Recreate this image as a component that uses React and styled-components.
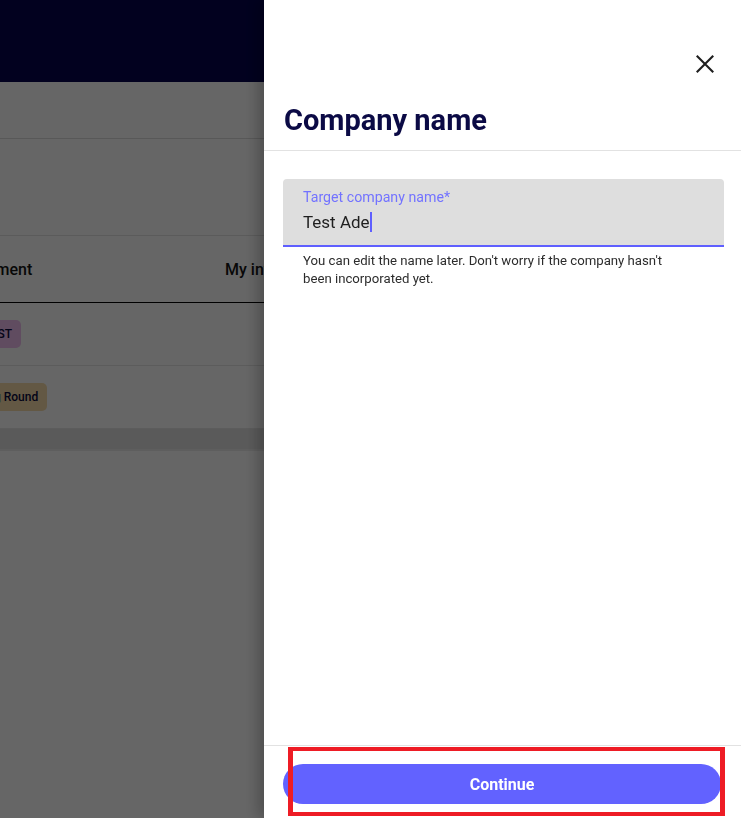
import React from "react";
import styled, { createGlobalStyle } from "styled-components";

const GlobalStyle = createGlobalStyle`
  html, body { margin: 0; padding: 0; }
  body {
    font-family: Roboto, "Noto Sans", "Liberation Sans", sans-serif;
    overflow: hidden;
    background: #fff;
  }
  * { box-sizing: border-box; }
`;

const Page = styled.div`
  position: relative;
  height: 100vh;
  overflow: hidden;
  background: #ffffff;
`;

const TopBar = styled.header`
  height: 82px;
  background: #05034e;
`;

const SubBar = styled.div`
  height: 57px;
  border-bottom: 1px solid #dcdcdc;
`;

const Summary = styled.section`
  height: 97px;
  border-bottom: 1px solid #e4e4e4;
`;

const Table = styled.div`
  margin-left: -46px;
  width: 760px;
`;

const Row = styled.div`
  display: grid;
  grid-template-columns: 271px 1fr;
  align-items: center;
  height: ${(p) => p.$h || 63}px;
  border-bottom: 1px solid ${(p) => (p.$dark ? "#000000" : "#e6e6e6")};
`;

const HeadCell = styled.div`
  font-size: 16px;
  font-weight: 500;
  color: #141414;
  white-space: nowrap;
`;

const Badge = styled.span`
  display: inline-flex;
  align-items: center;
  height: 28px;
  padding: 0 9px;
  border-radius: 5px;
  font-size: 12px;
  font-weight: 500;
  color: #0a0a3c;
  background: ${(p) => p.$bg};
  white-space: nowrap;
`;

const Band = styled.div`
  height: 22px;
  background: #e2e2e2;
  border-bottom: 2px solid #ececec;
`;

const Backdrop = styled.div`
  position: fixed;
  inset: 0;
  background: rgba(0, 0, 0, 0.6);
`;

const Drawer = styled.aside`
  position: fixed;
  top: 0;
  right: 0;
  bottom: 0;
  width: 477px;
  background: #ffffff;
  display: flex;
  flex-direction: column;
  box-shadow: -6px 0 14px rgba(0, 0, 0, 0.25);
`;

const DrawerHeader = styled.div`
  padding: 52px 24px 13px 20px;
  border-bottom: 1px solid #e2e2e2;
  display: flex;
  flex-direction: column;
`;

const CloseButton = styled.button`
  align-self: flex-end;
  width: 24px;
  height: 24px;
  padding: 0;
  border: none;
  background: transparent;
  display: flex;
  align-items: center;
  justify-content: center;
  cursor: pointer;
`;

const Title = styled.h1`
  margin: 27px 0 0;
  font-size: 29px;
  line-height: 34px;
  font-weight: 700;
  color: #0b0a45;
`;

const DrawerBody = styled.div`
  flex: 1;
  padding: 28px 17px 0 19px;
`;

const Field = styled.div`
  background: #dedede;
  border-radius: 4px 4px 0 0;
  border-bottom: 2px solid #5f5fff;
  padding: 10px 20px 11px;
`;

const Label = styled.div`
  font-size: 14.2px;
  line-height: 16px;
  color: #7373ff;
`;

const Value = styled.div`
  margin-top: 5px;
  font-size: 17px;
  line-height: 24px;
  color: #1f1f1f;
  display: flex;
  align-items: center;
`;

const Caret = styled.span`
  display: inline-block;
  width: 2px;
  height: 20px;
  background: #5f5fff;
`;

const Helper = styled.p`
  margin: 5px 0 0;
  padding-left: 20px;
  max-width: 400px;
  font-size: 13.2px;
  line-height: 18px;
  color: #2c2c2c;
`;

const Footer = styled.div`
  border-top: 1px solid #e2e2e2;
  padding: 18px 20px 14px 19px;
`;

const PrimaryButton = styled.button`
  width: 100%;
  height: 40px;
  border: none;
  border-radius: 20px;
  background: #6262ff;
  color: #ffffff;
  font-family: inherit;
  font-size: 16px;
  font-weight: 700;
  cursor: pointer;
`;

const Highlight = styled.div`
  position: absolute;
  left: 288px;
  top: 747px;
  width: 437px;
  height: 69px;
  border: solid #ee1c25;
  border-width: 4px 5px;
  pointer-events: none;
`;

export default function App() {
  return (
    <>
      <GlobalStyle />
      <Page>
        <TopBar />
        <SubBar />
        <Summary />
        <Table>
          <Row $h={67} $dark>
            <HeadCell>Instrument</HeadCell>
            <HeadCell>My investment</HeadCell>
          </Row>
          <Row>
            <div>
              <Badge $bg="#f0bdf0">MY TEST</Badge>
            </div>
            <div />
          </Row>
          <Row>
            <div>
              <Badge $bg="#f7dcaa">Pricing Round</Badge>
            </div>
            <div />
          </Row>
          <Band />
        </Table>
      </Page>
      <Backdrop />
      <Drawer>
        <DrawerHeader>
          <CloseButton aria-label="Close">
            <svg width="18" height="18" viewBox="0 0 18 18" fill="none">
              <path
                d="M1.5 1.5L16.5 16.5M16.5 1.5L1.5 16.5"
                stroke="#1e1e1e"
                strokeWidth="2.1"
                strokeLinecap="square"
              />
            </svg>
          </CloseButton>
          <Title>Company name</Title>
        </DrawerHeader>
        <DrawerBody>
          <Field>
            <Label>Target company name*</Label>
            <Value>
              Test Ade
              <Caret />
            </Value>
          </Field>
          <Helper>
            You can edit the name later. Don't worry if the company hasn't been
            incorporated yet.
          </Helper>
        </DrawerBody>
        <Footer>
          <PrimaryButton>Continue</PrimaryButton>
        </Footer>
      </Drawer>
      <Highlight />
    </>
  );
}
